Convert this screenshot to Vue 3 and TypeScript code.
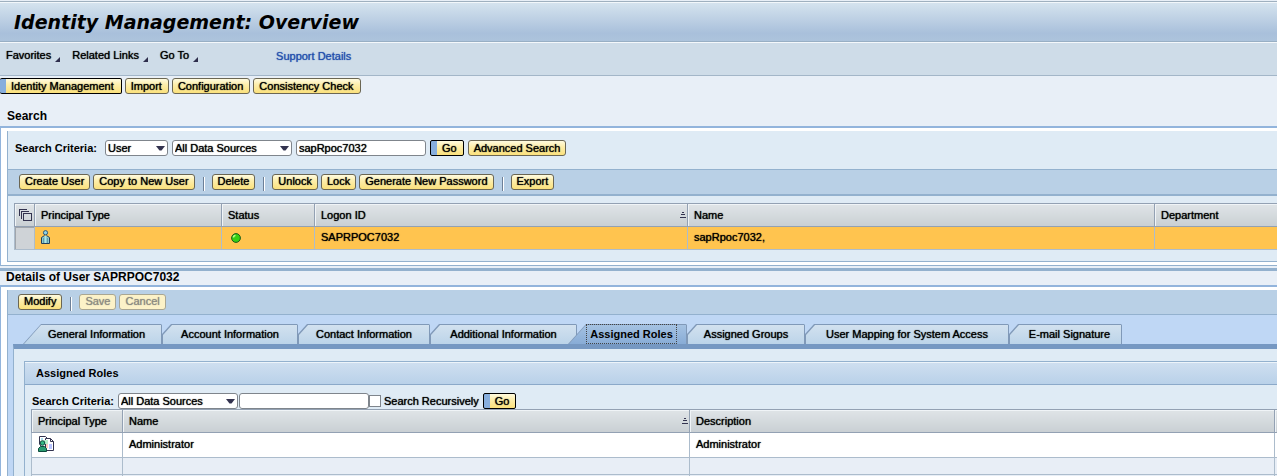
<script setup lang="ts">
import { ref } from 'vue'

const menus = ['Favorites', 'Related Links', 'Go To']
const views = ['Identity Management', 'Import', 'Configuration', 'Consistency Check']
const userActions = [
  ['Create User', 'Copy to New User'],
  ['Delete'],
  ['Unlock', 'Lock', 'Generate New Password'],
  ['Export'],
]
const tabs = [
  { label: 'General Information', width: 139 },
  { label: 'Account Information', width: 136 },
  { label: 'Contact Information', width: 132 },
  { label: 'Additional Information', width: 147 },
  { label: 'Assigned Roles', width: 110 },
  { label: 'Assigned Groups', width: 118 },
  { label: 'User Mapping for System Access', width: 204 },
  { label: 'E-mail Signature', width: 113 },
]
const activeTab = ref('Assigned Roles')
const principal = ref('User')
const source = ref('All Data Sources')
const term = ref('sapRpoc7032')
const roleSource = ref('All Data Sources')
const roleTerm = ref('')
const recursive = ref(false)
</script>

<template>
  <div class="page">
    <header class="title"><h1>Identity Management: Overview</h1></header>

    <nav class="menu">
      <button v-for="m in menus" :key="m" class="menu-item" type="button">
        {{ m }}
        <svg width="5" height="5" viewBox="0 0 5 5"><path d="M5 0V5H0Z" fill="#2e2e4c" /></svg>
      </button>
      <a class="support" href="#">Support Details</a>
    </nav>

    <div class="views">
      <button v-for="(v, i) in views" :key="v" type="button" class="btn" :class="{ primary: i === 0, first: i === 0 }">{{ v }}</button>
    </div>

    <h2 class="heading search-heading">Search</h2>
    <section class="frame">
      <div class="inner">
        <form class="criteria" @submit.prevent>
          <label for="principal">Search Criteria:</label>
          <span class="select w-user">
            <select id="principal" v-model="principal"><option>User</option><option>Group</option><option>Role</option></select>
            <svg width="9" height="5" viewBox="0 0 9 5"><path d="M0 0H9L5.500 4.500H3.500Z" fill="#33334f" /></svg>
          </span>
          <span class="select w-source">
            <select v-model="source" aria-label="Data source"><option>All Data Sources</option></select>
            <svg width="9" height="5" viewBox="0 0 9 5"><path d="M0 0H9L5.500 4.500H3.500Z" fill="#33334f" /></svg>
          </span>
          <input v-model="term" class="text" type="text" aria-label="Search term" />
          <button class="btn primary go" type="submit">Go</button>
          <button class="btn" type="button">Advanced Search</button>
        </form>

        <div class="toolbar">
          <template v-for="(group, g) in userActions" :key="g">
            <i v-if="g > 0" class="sep"></i>
            <button v-for="a in group" :key="a" class="btn" type="button">{{ a }}</button>
          </template>
        </div>

        <table class="grid users">
          <colgroup><col class="c-sel" /><col class="c-type" /><col class="c-status" /><col class="c-logon" /><col class="c-name" /><col /></colgroup>
          <thead>
            <tr>
              <th class="sel">
                <svg width="13" height="13" viewBox="0 0 13 13" fill="none" stroke="#33334f" shape-rendering="crispEdges"><path d="M0.500 7V0.500H8M2.500 10V2.500H10M4.500 4.500H12.500V11.500H4.500Z" /></svg>
              </th>
              <th>Principal Type</th>
              <th>Status</th>
              <th><div class="sortable">Logon ID
                <svg width="6" height="6" viewBox="0 0 6 6" shape-rendering="crispEdges"><path d="M2 0H4V1H2ZM1 2H5V3H1ZM0 5H6V6H0Z" fill="#33334f" /></svg></div></th>
              <th>Name</th>
              <th>Department</th>
            </tr>
          </thead>
          <tbody>
            <tr>
              <td class="sel"></td>
              <td>
                <svg width="9" height="14" viewBox="0 0 9 14"><path d="M2.500 6H6.500L8.500 8V13.500H0.500V8Z" fill="#8ecbd0" /><path d="M3.500 5.500L0.500 7.500V13.500H8.500V7.500L5.500 5.500" fill="none" stroke="#24405c" /><path d="M2.500 8V13M6.500 8V13" stroke="#5f9faa" /><path d="M4.500 6V13" stroke="#b4e8e8" /><circle cx="4.500" cy="2.700" r="2.100" fill="#8fd4e8" stroke="#2d5878" /></svg>
              </td>
              <td>
                <svg class="led" width="10" height="10" viewBox="0 0 10 10"><circle cx="5" cy="5" r="4.400" fill="#35cf12" stroke="#1d5a1c" /><path d="M2.500 4.500Q2.500 2.500 4.500 2.500" stroke="#b5ff8e" stroke-width="1.500" fill="none" /></svg>
              </td>
              <td>SAPRPOC7032</td>
              <td>sapRpoc7032,</td>
              <td></td>
            </tr>
          </tbody>
        </table>
      </div>
    </section>

    <h2 class="heading details-heading">Details of User SAPRPOC7032</h2>
    <section class="frame details">
      <div class="inner">
        <div class="toolbar plain">
          <button class="btn" type="button">Modify</button>
          <i class="sep"></i>
          <button class="btn" type="button" disabled>Save</button>
          <button class="btn" type="button" disabled>Cancel</button>
        </div>

        <div class="tabs" role="tablist">
          <button
            v-for="t in tabs" :key="t.label" type="button" role="tab" class="tab"
            :class="{ active: t.label === activeTab }" :aria-selected="t.label === activeTab"
            :style="{ '--w': t.width + 'px' }" @click="activeTab = t.label"
          ><span>{{ t.label }}</span></button>
        </div>

        <div class="tab-body">
          <div class="panel">
            <h3>Assigned Roles</h3>
            <form class="criteria roles" @submit.prevent>
              <label for="role-source">Search Criteria:</label>
              <span class="select w-source">
                <select id="role-source" v-model="roleSource"><option>All Data Sources</option></select>
                <svg width="9" height="5" viewBox="0 0 9 5"><path d="M0 0H9L5.500 4.500H3.500Z" fill="#33334f" /></svg>
              </span>
              <input v-model="roleTerm" class="text" type="text" aria-label="Role search term" />
              <input id="recursive" v-model="recursive" class="check" type="checkbox" />
              <label for="recursive" class="check-label">Search Recursively</label>
              <button class="btn primary go" type="submit">Go</button>
            </form>
            <table class="grid role-grid">
              <colgroup><col class="r-type" /><col class="r-name" /><col class="r-desc" /><col /></colgroup>
              <thead>
                <tr>
                  <th>Principal Type</th>
                  <th><div class="sortable">Name
                    <svg width="6" height="6" viewBox="0 0 6 6" shape-rendering="crispEdges"><path d="M2 0H4V1H2ZM1 2H5V3H1ZM0 5H6V6H0Z" fill="#33334f" /></svg></div></th>
                  <th>Description</th>
                  <th></th>
                </tr>
              </thead>
              <tbody>
                <tr>
                  <td>
                    <svg width="16" height="16" viewBox="0 0 16 16"><path d="M1.500 8V0.500H7.500L10.500 3.500V13H5Z" fill="#fff" stroke="#33334f" /><path d="M3 2H5V4H3Z" fill="#a8dcec" /><path d="M7.500 2.500H12.500L15.500 5.500V14.500H7.500Z" fill="#fff" stroke="#33334f" /><path d="M12.500 2.500V5.500H15.500" fill="none" stroke="#33334f" /><path d="M11 8H14V13H11Z" fill="#b8c4ff" /><path d="M6 4H10V8H6Z" fill="#b8f0cc" /><path d="M8 8H10V12H8Z" fill="#ffc9bd" /><circle cx="4.500" cy="7" r="2.300" fill="#35b883" stroke="#0c4b3c" /><path d="M0.500 15.500V12.500L2.500 10.500H6.500L8.500 12.500V15.500Z" fill="#299b70" stroke="#0c4b3c" /></svg>
                  </td>
                  <td>Administrator</td>
                  <td>Administrator</td>
                  <td></td>
                </tr>
                <tr class="empty"><td></td><td></td><td></td><td></td></tr>
                <tr class="empty"><td></td><td></td><td></td><td></td></tr>
              </tbody>
            </table>
          </div>
        </div>
      </div>
    </section>
  </div>
</template>

<style>
html { overflow: hidden; }
body { margin: 0; background: #e8eff7; }
</style>

<style scoped>
* { box-sizing: border-box; }
.page { font: 400 11px/14px "Liberation Sans", Arial, sans-serif; color: #000; text-shadow: 0 0 1px currentColor; background: #e8eff7; height: 100vh; overflow: hidden; white-space: nowrap; }
button, input, select { font: inherit; color: inherit; text-shadow: inherit; margin: 0; }
h1, h2, h3 { margin: 0; text-shadow: none; }
svg { display: block; }

.title { margin-top: 1px; height: 41px; border-top: 1px solid #9fb0bf; border-bottom: 1px solid #98afc4; background: linear-gradient(#d6e4ef, #a9c0db 80%, #adc4dc); box-shadow: inset 0 1px #f2f7fb; padding: 0 14px; display: flex; align-items: center; }
h1 { font: italic 700 19px/24px "DejaVu Sans", Verdana, sans-serif; }
.menu { height: 34px; border-top: 1px solid #f4f8fb; border-bottom: 1px solid #a3b6c8; background: #cedce8; padding: 5px 6px; display: flex; align-items: flex-start; }
.menu-item { background: none; border: 0; padding: 0; margin-right: 12px; display: flex; align-items: flex-end; gap: 4px; height: 14px; line-height: 14px; }
.support { color: #2450ad; text-decoration: none; margin-left: 66px; padding-top: 1px; }

.views { display: flex; gap: 3px; padding-top: 2px; }
.btn { height: 16px; border: 1px solid #6b6653; border-radius: 3px; background: linear-gradient(#fffbe0, #fdeeac 40%, #fbe17c); padding: 0 5px; line-height: 13px; flex: none; }
.views .btn { padding: 0 6px 0 5px; }
.btn.primary, .views .btn.primary { border: 1px solid #000; border-radius: 2px; background: linear-gradient(90deg, #87aedd 6px, transparent 6px), linear-gradient(#fffbe0, #fdeeac 40%, #fbe17c); padding: 0 6px 0 11px; }
.views .btn.first { border-left: 0; padding-right: 7px; }
.btn:disabled { color: #8c8b82; border-color: #a9a693; background: #fcf2c8; }

.heading { font-size: 12px; line-height: 14px; }
.search-heading { padding: 15px 7px 3px; }
.frame { border-left: 1px solid #92b4dc; border-top: 2px solid #92b4dc; border-bottom: 1px solid #93b1ce; background: #fff; padding: 3px 0 3px 6px; }
.inner { border-left: 1px solid #93b1ce; border-bottom: 1px solid #93b1ce; background: #dfebf5; }
.criteria { display: flex; align-items: center; height: 38px; padding: 0 7px 4px; gap: 4px; }
.criteria > label:first-child { margin-right: 4px; font-weight: 700; text-shadow: none; }
.select { position: relative; display: block; height: 16px; }
.select select { appearance: none; display: block; width: 100%; height: 16px; border: 1px solid #7f858c; border-radius: 3px; background: #fff; padding: 0 3px 0 2px; line-height: 14px; }
.select svg { position: absolute; right: 3px; top: 6px; pointer-events: none; }
.w-user { width: 63px; }
.w-source { width: 120px; }
.text { width: 130px; height: 16px; border: 1px solid #7f858c; border-radius: 3px; background: #fff; padding: 0 3px 0 2px; }
.toolbar { height: 27px; display: flex; align-items: center; gap: 3px; padding: 0 11px 1px; background: #b9d0e6; border-top: 1px solid #93b1ce; border-bottom: 2px solid #93b1ce; }
.toolbar.plain { height: 25px; border-top: 0; border-bottom-width: 1px; padding: 0 10px 1px; }
.sep { width: 2px; height: 14px; margin: 5px 4px 0 5px; border-left: 1px solid #6d8098; background: #fff; }

.grid { border-collapse: collapse; table-layout: fixed; width: 100%; }
.grid th { height: 23px; padding: 0 6px; text-align: left; border: 1px solid #93a1b3; background: linear-gradient(#dfe4e7, #c9cfd3); box-shadow: inset 1px 1px #f0f4f7; font-weight: 400; }
.grid td { padding: 0 6px 2px; height: 23px; border: 1px solid #acbccc; }
.grid th:last-child, .grid td:last-child { border-right: 0; }
.sortable { display: flex; justify-content: space-between; align-items: center; margin-right: -5px; }
.users { width: calc(100% - 6px); margin: 7px 0 11px 6px; }
.users td { background: #ffc44f; }
.users td.sel { background: #cfd3d7; box-shadow: inset 1px 1px #a0a5ab; }
.users .sel { padding: 0 4px; }
.led { margin: 1px 0 0 3px; }
.c-sel { width: 20px; } .c-type { width: 187px; } .c-status { width: 93px; } .c-logon { width: 373px; } .c-name { width: 467px; }

.details-heading { border-top: 3px solid #93b1ce; margin-top: 2px; padding: 0 6px 2px; line-height: 12px; }
.details { padding-bottom: 0; }
.details > .inner { background: #bfd7f5; }
.tabs { height: 29px; padding: 9px 0 0 15px; display: flex; }
.tab { flex: none; width: var(--w); border: 0; padding: 0; height: 20px; line-height: 20px; background: #8099b8; clip-path: polygon(0 100%, 18px 0, calc(100% - 1px) 0, 100% 1px, 100% 100%); position: relative; }
.tab + .tab:not(.active) { clip-path: polygon(0 100%, 0 10px, 9px 0, calc(100% - 1px) 0, 100% 1px, 100% 100%); }
.tab::before { content: ""; position: absolute; inset: 1px 1px 0 1px; background: linear-gradient(#d2e1ef, #bcd4e9); clip-path: polygon(0 100%, 17px 0, 100% 0, 100% 100%); }
.tab + .tab:not(.active)::before { clip-path: polygon(0 100%, 0 10px, 9px 0, 100% 0, 100% 100%); }
.tab span { position: relative; }
.tab:first-child span, .tab:last-child span, .tab.active span { margin-left: 8px; }
.tab.active { z-index: 1; width: calc(var(--w) + 9px); font-weight: 700; text-shadow: none; }
.tab + .tab.active { margin-left: -9px; }
.tab.active::before { background: linear-gradient(#a5c2e2, #88acd6); }
.tab.active span { display: inline-block; height: 20px; padding: 0 3px; border: 1px dotted #444; line-height: 18px; vertical-align: top; }
.tab-body { border-top: 5px solid #7698c2; border-left: 1px solid #93b1ce; margin-left: 5px; background: #dfebf5; padding: 12px 0 0 10px; }
.panel { border-left: 1px solid #93b1ce; border-top: 1px solid #93b1ce; }
h3 { font-size: 11px; height: 23px; line-height: 23px; padding-left: 11px; background: linear-gradient(#cfdff0, #b9d1e9); border-bottom: 1px solid #8ba9c9; box-shadow: inset 0 1px #edf4fa; }
.roles { height: 16px; margin-top: 8px; gap: 0; padding: 0 7px; }
.roles .w-source { margin-right: 1px; }
.check { appearance: none; width: 12px; height: 12px; border: 1px solid #7f858c; background: #fff; }
.check:checked { background: #33334f; box-shadow: inset 0 0 0 2px #fff; }
.check-label { margin: 0 4px 0 3px; }
.role-grid { width: calc(100% - 6px); margin-left: 6px; }
.role-grid th { padding-bottom: 1px; }
.role-grid td { background: #fff; height: 25px; }
.role-grid .empty td { height: 17px; background: #e8eef6; }
.r-type { width: 91px; } .r-name { width: 567px; } .r-desc { width: 585px; }
</style>
